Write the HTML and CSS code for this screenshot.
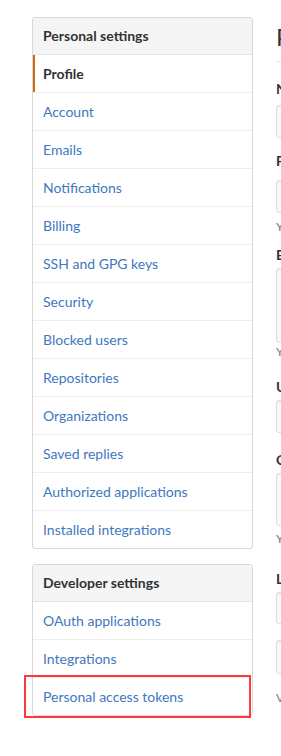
FILE: index.html
```html
<!DOCTYPE html>
<html lang="en">
<head>
<meta charset="utf-8">
<title>Your Profile</title>
<link rel="stylesheet" href="styles.css">
</head>
<body>
<div class="page">
  <nav class="sidebar">
    <div class="menu">
      <h3 class="menu-heading">Personal settings</h3>
      <a class="menu-item selected" href="#">Profile</a>
      <a class="menu-item" href="#">Account</a>
      <a class="menu-item" href="#">Emails</a>
      <a class="menu-item" href="#">Notifications</a>
      <a class="menu-item" href="#">Billing</a>
      <a class="menu-item" href="#">SSH and GPG keys</a>
      <a class="menu-item" href="#">Security</a>
      <a class="menu-item" href="#">Blocked users</a>
      <a class="menu-item" href="#">Repositories</a>
      <a class="menu-item" href="#">Organizations</a>
      <a class="menu-item" href="#">Saved replies</a>
      <a class="menu-item" href="#">Authorized applications</a>
      <a class="menu-item" href="#">Installed integrations</a>
    </div>
    <div class="menu">
      <h3 class="menu-heading">Developer settings</h3>
      <a class="menu-item" href="#">OAuth applications</a>
      <a class="menu-item" href="#">Integrations</a>
      <a class="menu-item highlighted" href="#">Personal access tokens</a>
    </div>
  </nav>
  <main class="content">
    <h2 class="subhead">Public profile</h2>
    <div class="form-group g-name">
      <label class="label">Name</label>
      <input class="form-control" type="text">
    </div>
    <div class="form-group g-email">
      <label class="label">Public email</label>
      <div class="form-control select"></div>
      <p class="note">You can manage verified email addresses in your email settings.</p>
    </div>
    <div class="form-group g-bio">
      <label class="label">Bio</label>
      <textarea class="form-control textarea"></textarea>
      <p class="note">You can @mention other users and organizations to link to them.</p>
    </div>
    <div class="form-group g-url">
      <label class="label">URL</label>
      <input class="form-control" type="text">
    </div>
    <div class="form-group g-company">
      <label class="label">Company</label>
      <div class="form-control tall"></div>
      <p class="note note-company">You can @mention your company's GitHub organization to link it.</p>
    </div>
    <div class="form-group g-location">
      <label class="label">Location</label>
      <input class="form-control short" type="text">
      <input class="form-control second" type="text">
      <p class="note note-last">Visible on your public profile.</p>
    </div>
  </main>
</div>
</body>
</html>
```

FILE: styles.css
```css
html, body {
  margin: 0;
  padding: 0;
  background: #fff;
  overflow: hidden;
}

body {
  font-family: Lato, "Noto Sans", "Liberation Sans", sans-serif;
  font-size: 14px;
  line-height: 1.5;
  color: #333;
}

.page {
  display: flex;
  align-items: flex-start;
  width: 1000px;
  padding: 17px 0 0 32px;
}

.sidebar {
  flex: 0 0 221px;
  width: 221px;
}

.menu {
  box-sizing: border-box;
  width: 100%;
  border: 1px solid #d8d8d8;
  border-radius: 3px;
  margin-bottom: 15px;
  background: #fff;
}

.menu-heading {
  margin: 0;
  padding: 8px 10px;
  font-size: 14px;
  line-height: 20px;
  font-weight: 700;
  color: #333;
  background: #f5f5f5;
  border-bottom: 1px solid #e5e5e5;
  border-radius: 3px 3px 0 0;
}

.menu-item {
  display: block;
  position: relative;
  padding: 8px 10px;
  line-height: 21px;
  color: #4078c0;
  text-decoration: none;
  border-bottom: 1px solid #eee;
}

.menu-item:last-child {
  border-bottom: 0;
}

.menu-item.selected {
  font-weight: 700;
  color: #333;
}

.menu-item.selected::before {
  content: "";
  position: absolute;
  left: 0;
  top: 0;
  bottom: 0;
  width: 2px;
  background: #d26911;
}

.menu-item.highlighted::after {
  content: "";
  position: absolute;
  left: -9px;
  top: -3px;
  width: 227px;
  height: 43px;
  box-sizing: border-box;
  border: 2px solid #fb3b3b;
}

.content {
  flex: 0 0 700px;
  margin-left: 23px;
}

.subhead {
  margin: 5px 0 0;
  padding-bottom: 9px;
  font-size: 24px;
  font-weight: 400;
  line-height: 30px;
  color: #333;
  border-bottom: 1px solid #e5e5e5;
}

.form-group {
  display: flex;
  flex-direction: column;
  align-items: flex-start;
}

.label {
  display: block;
  font-weight: 700;
  line-height: 20px;
  margin-bottom: 3px;
}

.form-control {
  display: block;
  box-sizing: border-box;
  width: 440px;
  height: 33px;
  margin: 0;
  padding: 6px 8px;
  font: inherit;
  border: 1px solid #ddd;
  border-radius: 3px;
  background: #fafafa;
  box-shadow: inset 0 1px 2px rgba(0, 0, 0, 0.075);
}

.textarea {
  height: 75px;
  resize: none;
}

.tall {
  height: 53px;
}

.short {
  height: 32px;
}

.second {
  height: 34px;
  margin-top: 16px;
}

.note {
  margin: 5px 0 0;
  font-size: 12px;
  line-height: 18px;
  color: #767676;
}

.g-name { margin-top: 17px; }
.g-name .label { margin-bottom: 6px; }
.g-email { margin-top: 13px; }
.g-email .label { margin-bottom: 9px; }
.g-bio { margin-top: 9px; }
.g-bio .note { margin-top: 0; }
.g-url { margin-top: 16px; }
.g-company { margin-top: 17px; }
.note-company { margin-top: 4px; }
.g-location { margin-top: 21px; }
.note-last { margin-top: 15px; }
```
